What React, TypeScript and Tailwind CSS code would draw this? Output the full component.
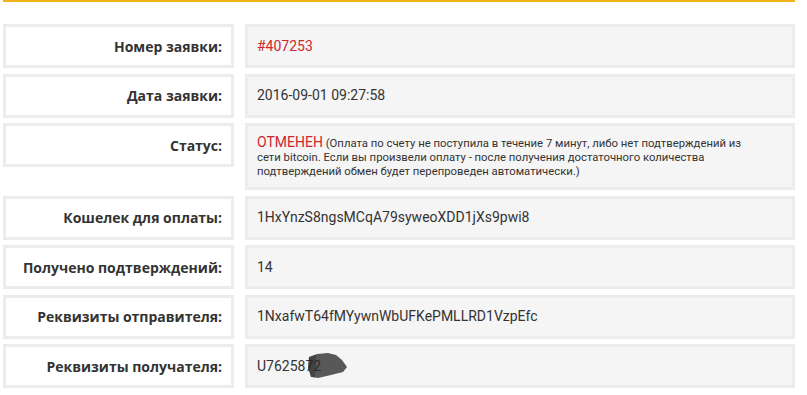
import type { ReactNode } from 'react';

type Row = {
  label: string;
  value: ReactNode;
  tall?: boolean;
};

const rows: Row[] = [
  { label: 'Номер заявки:', value: <span className="text-[#d0272e]">#407253</span> },
  { label: 'Дата заявки:', value: '2016-09-01 09:27:58' },
  {
    label: 'Статус:',
    tall: true,
    value: (
      <>
        <span className="text-[14px] text-[#d0272e]">ОТМЕНЕН</span> (Оплата по счету не поступила в течение 7 минут, либо нет
        подтверждений из сети bitcoin. Если вы произвели оплату - после получения достаточного количества подтверждений
        обмен будет перепроведен автоматически.)
      </>
    ),
  },
  { label: 'Кошелек для оплаты:', value: '1HxYnzS8ngsMCqA79syweoXDD1jXs9pwi8' },
  { label: 'Получено подтверждений:', value: '14' },
  { label: 'Реквизиты отправителя:', value: '1NxafwT64fMYywnWbUFKePMLLRD1VzpEfc' },
  {
    label: 'Реквизиты получателя:',
    value: (
      <span className="relative">
        U7625872
        {/* scribbled-out tail of the account number */}
        <svg className="absolute left-[50px] top-[-4px]" width="42" height="28" viewBox="0 0 42 28">
          <path
            d="M2 5 L10 2 L21 1 L29 3 L35 8 L40 15 L36 20 L24 23 L11 26 L4 25 L1 15 Z"
            fill="#2b2b2b"
            fillOpacity="0.78"
          />
          <path d="M2 5 L9 3 L8 25 L4 25 L1 15 Z" fill="#1e1e1e" fillOpacity="0.35" />
        </svg>
      </span>
    ),
  },
];

const InfoRow = ({ label, value, tall }: Row) => (
  <div className="flex items-start gap-[11px]">
    <div className="flex h-[44px] w-[231px] items-center justify-end border-[3px] border-[#ececec] bg-white pr-[9px] font-['Open_Sans','Roboto',sans-serif] text-[14px] font-bold text-[#333]">
      {label}
    </div>
    <div
      className={
        tall
          ? 'w-[550px] border-[3px] border-[#ececec] bg-[#f5f5f5] pb-[8px] pl-[9px] pr-[40px] pt-[9px] text-[11.3px] leading-[14px] text-[#333]'
          : 'flex h-[44px] w-[550px] items-center border-[3px] border-[#ececec] bg-[#f5f5f5] pl-[9px] text-[14px] text-[#333]'
      }
    >
      {value}
    </div>
  </div>
);

export default function App() {
  return (
    <div className="min-h-[395px] bg-white font-['Roboto','Liberation_Sans',sans-serif]">
      <div className="ml-[3px] w-[792px]">
        <div className="h-[2px] bg-[#efb317]" />
        <div className="mt-[22px] flex flex-col gap-[5.5px]">
          {rows.map((row) => (
            <InfoRow key={row.label} {...row} />
          ))}
        </div>
      </div>
    </div>
  );
}
